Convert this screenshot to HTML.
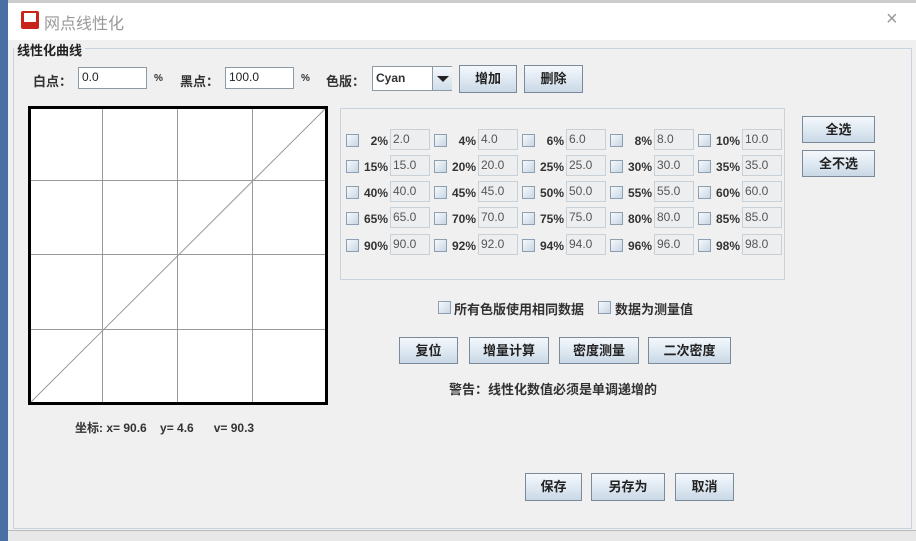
<!DOCTYPE html><html><head><meta charset="utf-8"><style>
*{margin:0;padding:0;box-sizing:border-box}
body{width:916px;height:541px;overflow:hidden;background:#f0f0f0;position:relative;font-family:"Liberation Sans","Noto Sans CJK SC",sans-serif;font-size:12px;color:#333}
.a{position:absolute}
.b{position:absolute;font-weight:bold;font-size:12px;color:#333;white-space:nowrap}
.btn{position:absolute;border:1px solid #7a8a99;background:linear-gradient(#f4f8fc,#dbe6f0 60%,#c9d8e6);font-weight:bold;font-size:13px;color:#222;text-align:center}
.in{position:absolute;background:#fff;border:1px solid #8c9aa6;font-size:12px;padding:2px 3px;color:#222}
.f{position:absolute;width:40px;height:21px;border:1px solid #c8d0d8;background:#eceef0;color:#555;font-size:12px;padding:2px 2px}
.cb{position:absolute;width:13px;height:13px;border:1px solid #8ea0b0;background:linear-gradient(135deg,#f6f9fc,#c8d6e4)}
</style></head><body>
<div class="a" style="left:0;top:0;width:8px;height:541px;background:#4a6fa5"></div>
<div class="a" style="left:8px;top:0;width:908px;height:3px;background:#ccc"></div>
<div class="a" style="left:8px;top:3px;width:908px;height:37px;background:#fff"></div>
<div class="a" style="left:21px;top:11px;width:18px;height:18px;background:#c8241c;border-radius:2px"><div style="position:absolute;left:3px;top:2px;width:12px;height:9px;background:#fff"></div></div>
<div class="a" style="left:44px;top:10px;font-size:16px;color:#999">网点线性化</div>
<div class="a" style="left:886px;top:8px;font-size:20px;color:#999">×</div>
<div class="a" style="left:13px;top:48px;width:899px;height:481px;border:1px solid #c8d2dc"></div>
<div class="a" style="left:14px;top:40px;background:#f0f0f0;padding:0 3px;font-weight:bold;font-size:13px;color:#222">线性化曲线</div>
<div class="a" style="left:8px;top:530px;width:908px;height:11px;background:#e8e8e8;border-top:1px solid #bbb"></div>

<div class="b" style="left:33px;top:71px;font-size:13px">白点：</div>
<div class="in" style="left:78px;top:67px;width:69px;height:22px">0.0</div>
<div class="b" style="left:154px;top:73px;font-size:10px">%</div>
<div class="b" style="left:180px;top:71px;font-size:13px">黑点：</div>
<div class="in" style="left:225px;top:67px;width:69px;height:22px">100.0</div>
<div class="b" style="left:301px;top:73px;font-size:10px">%</div>
<div class="b" style="left:326px;top:71px;font-size:13px">色版：</div>
<div class="a" style="left:372px;top:66px;width:80px;height:25px;border:1px solid #8c9aa6;background:#fff"><span style="position:absolute;left:3px;top:4px;font-weight:bold">Cyan</span><div style="position:absolute;left:59px;top:0;width:20px;height:23px;border-left:1px solid #8c9aa6;background:linear-gradient(#f4f8fc,#d0dde9)"><div style="position:absolute;left:4px;top:9px;border-left:6px solid transparent;border-right:6px solid transparent;border-top:6px solid #222"></div></div></div>
<div class="btn" style="left:459px;top:65px;width:58px;height:28px;line-height:26px">增加</div>
<div class="btn" style="left:524px;top:65px;width:59px;height:28px;line-height:26px">删除</div>

<svg class="a" style="left:28px;top:106px" width="300" height="299">
<rect x="1.5" y="1.5" width="297" height="296" fill="#fff" stroke="#000" stroke-width="3"/>
<g stroke="#999" stroke-width="1"><line x1="74.5" y1="3" x2="74.5" y2="296"/><line x1="149.5" y1="3" x2="149.5" y2="296"/><line x1="224.5" y1="3" x2="224.5" y2="296"/><line x1="3" y1="74.5" x2="297" y2="74.5"/><line x1="3" y1="148.5" x2="297" y2="148.5"/><line x1="3" y1="223.5" x2="297" y2="223.5"/><line x1="3" y1="296" x2="297" y2="3"/></g></svg>
<div class="b" style="left:75px;top:419px">坐标: x= 90.6 &nbsp;&nbsp; y= 4.6 &nbsp;&nbsp;&nbsp;&nbsp; v= 90.3</div>

<div class="a" style="left:340px;top:108px;width:445px;height:172px;border:1px solid #c8d2dc"></div>
<div id="g"></div>
<script>
var rows=[[2,4,6,8,10],[15,20,25,30,35],[40,45,50,55,60],[65,70,75,80,85],[90,92,94,96,98]];var ys=[129,155,181,207,234];var h='';
rows.forEach(function(r,i){r.forEach(function(v,j){var x=346+j*88,y=ys[i];h+='<div class="cb" style="left:'+x+'px;top:'+(y+5)+'px"></div><div class="b" style="right:'+(916-388-j*88)+'px;top:'+(y+5)+'px">'+v+'%</div><div class="f" style="left:'+(390+j*88)+'px;top:'+y+'px">'+v+'.0</div>';});});
document.getElementById('g').innerHTML=h;
</script>
<div class="btn" style="left:802px;top:116px;width:73px;height:27px;line-height:25px">全选</div>
<div class="btn" style="left:802px;top:150px;width:73px;height:27px;line-height:25px">全不选</div>

<div class="cb" style="left:438px;top:301px"></div><div class="b" style="left:454px;top:299px;font-size:13px">所有色版使用相同数据</div>
<div class="cb" style="left:598px;top:301px"></div><div class="b" style="left:615px;top:299px;font-size:13px">数据为测量值</div>
<div class="btn" style="left:399px;top:337px;width:59px;height:27px;line-height:25px">复位</div>
<div class="btn" style="left:469px;top:337px;width:80px;height:27px;line-height:25px">增量计算</div>
<div class="btn" style="left:559px;top:337px;width:80px;height:27px;line-height:25px">密度测量</div>
<div class="btn" style="left:648px;top:337px;width:83px;height:27px;line-height:25px">二次密度</div>
<div class="b" style="left:449px;top:379px;font-size:13px">警告：线性化数值必须是单调递增的</div>
<div class="btn" style="left:525px;top:473px;width:57px;height:28px;line-height:26px">保存</div>
<div class="btn" style="left:591px;top:473px;width:74px;height:28px;line-height:26px">另存为</div>
<div class="btn" style="left:675px;top:473px;width:59px;height:28px;line-height:26px">取消</div>
</body></html>
